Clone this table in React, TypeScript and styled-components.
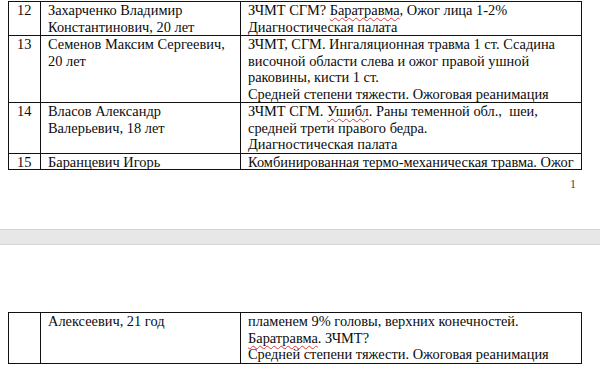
import * as React from 'react';
import styled, { createGlobalStyle } from 'styled-components';

const GlobalStyle = createGlobalStyle`
  html, body {
    margin: 0;
    padding: 0;
    background: #ffffff;
  }
  body {
    font-family: "Liberation Serif", "Times New Roman", serif;
    color: #0c0c0c;
  }
`;

type Row = {
  num: string;
  name: React.ReactNode;
  diag: React.ReactNode;
  height?: number;
};

const rows: Row[] = [
  {
    num: '12',
    name: <>Захарченко Владимир<br />Константинович, 20 лет</>,
    diag: (
      <>
        ЗЧМТ СГМ? <Wavy>Баратравма</Wavy>, Ожог лица 1-2%<br />
        Диагностическая палата
      </>
    ),
  },
  {
    num: '13',
    name: <>Семенов Максим Сергеевич,<br />20 лет</>,
    diag: (
      <>
        ЗЧМТ, СГМ. Ингаляционная травма 1 ст. Ссадина<br />
        височной области слева и ожог правой ушной<br />
        раковины, кисти 1 ст.<br />
        Средней степени тяжести. Ожоговая реанимация
      </>
    ),
  },
  {
    num: '14',
    name: <>Власов Александр<br />Валерьевич, 18 лет</>,
    diag: (
      <>
        ЗЧМТ СГМ. <Wavy>Ушибл</Wavy>. Раны теменной обл.,&nbsp; шеи,<br />
        средней трети правого бедра.<br />
        Диагностическая палата
      </>
    ),
  },
  {
    num: '15',
    name: <><Wavy>Баранцевич</Wavy> Игорь</>,
    diag: (
      <>
        Комбинированная <Wavy>термо-</Wavy><Wavy $tone="blue">механическая</Wavy> травма. Ожог
      </>
    ),
    height: 15,
  },
];

const App: React.FC = () => (
  <>
    <GlobalStyle />
    <Doc>
      <Page>
        <Table>
          {rows.map((row) => (
            <TableRow key={row.num} style={row.height ? { height: row.height } : undefined}>
              <NumCell>{row.num}</NumCell>
              <Cell>{row.name}</Cell>
              <Cell $last>{row.diag}</Cell>
            </TableRow>
          ))}
        </Table>
        <PageNumber>1</PageNumber>
      </Page>
      <PageGap />
      <Page $next>
        <Table $top>
          <TableRow>
            <NumCell />
            <Cell>Алексеевич, 21 год</Cell>
            <Cell $last>
              пламенем 9% головы, верхних конечностей.<br />
              <Wavy>Баратравма</Wavy>. ЗЧМТ?<br />
              Средней степени тяжести. Ожоговая реанимация
            </Cell>
          </TableRow>
        </Table>
      </Page>
    </Doc>
  </>
);

export default App;

function Wavy({ children, $tone }: { children: React.ReactNode; $tone?: 'red' | 'blue' }) {
  return <Squiggle $tone={$tone || 'red'}>{children}</Squiggle>;
}

const Squiggle = styled.span<{ $tone: 'red' | 'blue' }>`
  text-decoration: underline wavy ${(p) => (p.$tone === 'blue' ? '#3a5bc4' : '#d83a3a')};
  text-decoration-thickness: 1px;
  text-underline-offset: 2px;
  text-decoration-skip-ink: none;
`;

const Doc = styled.div`
  width: 600px;
  height: 380px;
  overflow: hidden;
  display: flex;
  flex-direction: column;
`;

const Page = styled.div<{ $next?: boolean }>`
  background: #ffffff;
  padding: ${(p) => (p.$next ? '67px 0 0 8px' : '1px 0 0 8px')};
  height: ${(p) => (p.$next ? 'auto' : '228px')};
  display: flex;
  flex-direction: column;
`;

const PageGap = styled.div`
  height: 14px;
  background: #e7e7e7;
  border-top: 1px solid #d3d3d3;
  border-bottom: 1px solid #d6d6d6;
`;

const Table = styled.div<{ $top?: boolean }>`
  width: 574px;
  display: flex;
  flex-direction: column;
  border-left: 1.5px solid #111;
  border-right: 1.5px solid #111;
  border-top: ${(p) => (p.$top ? '1.5px' : '1px')} solid #111;
  border-bottom: 1.5px solid #111;
  font-size: 14.4px;
  line-height: 16.5px;
  box-sizing: border-box;
`;

const TableRow = styled.div`
  display: grid;
  grid-template-columns: 32px 200px 1fr;
  overflow: hidden;
  & + & {
    border-top: 1px solid #111;
  }
`;

const Cell = styled.div<{ $last?: boolean }>`
  padding: 0 4px 0 7px;
  border-right: ${(p) => (p.$last ? 'none' : '1px solid #111')};
  white-space: nowrap;
`;

const NumCell = styled(Cell)`
  padding: 0 0 0 8px;
`;

const PageNumber = styled.div`
  align-self: flex-end;
  margin: 7px 24px 0 0;
  font-size: 12px;
  line-height: 14px;
  color: #444;
`;
